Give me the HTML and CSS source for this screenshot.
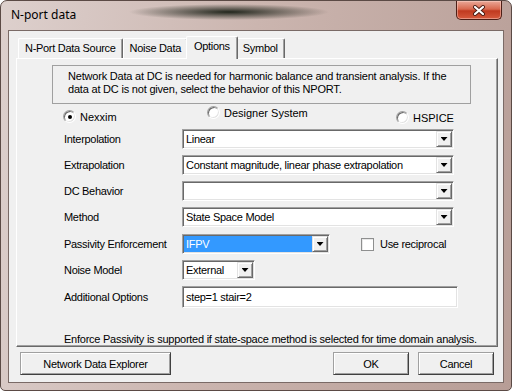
FILE: index.html
```html
<!DOCTYPE html>
<html lang="en">
<head>
  <meta charset="UTF-8">
  <title>N-port data</title>
  <link rel="stylesheet" href="styles.css">
</head>
<body>

<div class="window">
  <div class="titlebar">
    <span class="title">N-port data</span>
    <button class="close" type="button" aria-label="Close">
      <svg width="14" height="11" viewBox="0 0 14 11">
        <path d="M3 2 L11 9 M11 2 L3 9" stroke="#4a1c14" stroke-width="4" stroke-linecap="round"/>
        <path d="M3 2 L11 9 M11 2 L3 9" stroke="#fff" stroke-width="2.2" stroke-linecap="round"/>
      </svg>
    </button>
  </div>

  <div class="client">
    <div class="tabs">
      <div class="tab">N-Port Data Source</div>
      <div class="tab">Noise Data</div>
      <div class="tab active">Options</div>
      <div class="tab">Symbol</div>
    </div>

    <div class="pane">
      <div class="info">
        Network Data at DC is needed for harmonic balance and transient analysis. If the<br>
        data at DC is not given, select the behavior of this NPORT.
      </div>

      <div class="radios">
        <label class="radio-opt nexxim"><span class="radio checked"></span>Nexxim</label>
        <label class="radio-opt designer"><span class="radio"></span>Designer System</label>
        <label class="radio-opt hspice"><span class="radio"></span>HSPICE</label>
      </div>

      <div class="form">
        <span class="label">Interpolation</span>
        <div class="combo"><span class="value">Linear</span><span class="drop"></span></div>

        <span class="label">Extrapolation</span>
        <div class="combo"><span class="value">Constant magnitude, linear phase extrapolation</span><span class="drop"></span></div>

        <span class="label">DC Behavior</span>
        <div class="combo"><span class="value"></span><span class="drop"></span></div>

        <span class="label">Method</span>
        <div class="combo"><span class="value">State Space Model</span><span class="drop"></span></div>

        <span class="label spaced">Passivity Enforcement</span>
        <div class="inline-row spaced">
          <div class="combo short selected"><span class="value">IFPV</span><span class="drop"></span></div>
          <label class="check-opt"><span class="checkbox"></span>Use reciprocal</label>
        </div>

        <span class="label">Noise Model</span>
        <div class="combo tiny"><span class="value">External</span><span class="drop"></span></div>

        <span class="label">Additional Options</span>
        <div class="textbox">step=1 stair=2</div>
      </div>

      <div class="note">Enforce Passivity is supported if state-space method is selected for time domain analysis.</div>
    </div>

    <div class="buttons">
      <button class="btn explorer" type="button">Network Data Explorer</button>
      <button class="btn ok" type="button">OK</button>
      <button class="btn" type="button">Cancel</button>
    </div>
  </div>
</div>

</body>
</html>
```

FILE: styles.css
```css
body {
  margin: 0;
  background: #fff;
  font-family: "Liberation Sans", Arial, sans-serif;
  font-size: 11px;
  color: #000;
}
.window {
  width: 512px;
  height: 391px;
  box-sizing: border-box;
  border: 1px solid #5b4a45;
  border-radius: 7px 7px 5px 5px;
  padding: 0 7px 7px;
  display: flex;
  flex-direction: column;
  overflow: hidden;
  background:
    radial-gradient(100px 8px at 228px 11px, rgba(24,30,20,0.95), rgba(24,30,20,0)),
    linear-gradient(100deg, #ddd0cd 0%, #cbb5af 45%, #b79d96 100%);
}
.titlebar {
  height: 29px;
  display: flex;
  align-items: flex-start;
}
.title {
  font-family: "Noto Sans", sans-serif;
  font-size: 12px;
  line-height: 16px;
  margin: 6px 0 0 3px;
}
.close {
  margin-left: auto;
  margin-right: 2px;
  width: 46px;
  height: 19px;
  padding: 0;
  border: 1px solid #4d1f17;
  border-top: none;
  border-radius: 0 0 5px 5px;
  background: linear-gradient(#eaa898, #d8694f 45%, #c03a20 55%, #d65a3d);
  box-shadow: inset 0 0 0 1px rgba(255,220,210,0.45);
  display: flex;
  align-items: center;
  justify-content: center;
}
.client {
  flex: 1;
  display: flex;
  flex-direction: column;
  border: 1px solid #7a6a66;
  background: #f0f0f0;
  padding: 5px 5px 7px 7px;
}
.tabs {
  display: flex;
  align-items: flex-end;
  height: 22px;
  margin-left: 2px;
}
.tab {
  height: 20px;
  box-sizing: border-box;
  padding: 0 6px;
  line-height: 18px;
  letter-spacing: -0.3px;
  border: 1px solid;
  border-color: #fff #696969 transparent #fff;
  border-bottom: none;
  border-radius: 2px 2px 0 0;
  box-shadow: inset -1px 0 #a0a0a0;
  white-space: nowrap;
}
.tab.active {
  height: 23px;
  margin: 0 -2px -1px;
  padding: 0 7px;
  line-height: 19px;
  position: relative;
  z-index: 1;
  background: #f0f0f0;
}
.pane {
  flex: 1;
  display: flex;
  flex-direction: column;
  border: 1px solid;
  border-color: #fff #696969 #696969 #fff;
  box-shadow: inset -1px -1px #a0a0a0;
  padding: 6px 0 0 35px;
}
.info {
  width: 419px;
  height: 39px;
  box-sizing: border-box;
  border: 1px solid #a0a0a0;
  padding: 4px 0 0 15px;
  line-height: 13px;
  letter-spacing: -0.2px;
}
.radios {
  display: flex;
  align-items: flex-start;
  height: 13px;
  margin-top: 6px;
}
.radio-opt {
  display: flex;
  align-items: center;
  gap: 4px;
}
.nexxim {
  margin-left: 11px;
  width: 144px;
}
.designer {
  width: 189px;
  margin-top: -4px;
}
.hspice {
  margin-top: 1px;
}
.radio {
  width: 13px;
  height: 13px;
  box-sizing: border-box;
  border-radius: 50%;
  border: 1px solid;
  border-color: #a0a0a0 #fff #fff #a0a0a0;
  box-shadow: inset 1px 1px #696969, inset -1px -1px #e3e3e3;
  background: #fff;
  display: flex;
  align-items: center;
  justify-content: center;
}
.radio.checked::after {
  content: "";
  width: 4px;
  height: 4px;
  border-radius: 50%;
  background: #000;
}
.form {
  display: grid;
  grid-template-columns: 118px auto;
  row-gap: 6px;
  align-items: center;
  justify-items: start;
  margin-top: 6px;
  padding-left: 12px;
  letter-spacing: -0.3px;
}
.spaced {
  margin-top: 1px;
}
.combo {
  width: 272px;
  height: 20px;
  box-sizing: border-box;
  padding: 1px;
  border: 1px solid;
  border-color: #a0a0a0 #fff #fff #a0a0a0;
  box-shadow: inset 1px 1px #696969, inset -1px -1px #e3e3e3;
  background: #fff;
  display: flex;
}
.combo .value {
  flex: 1;
  padding-left: 2px;
  line-height: 16px;
  white-space: nowrap;
  overflow: hidden;
}
.combo.selected .value {
  background: #3399ff;
  color: #fff;
}
.combo.short {
  width: 148px;
}
.combo.tiny {
  width: 73px;
}
.drop {
  width: 16px;
  height: 16px;
  box-sizing: border-box;
  background: #f0f0f0;
  border: 1px solid;
  border-color: #e3e3e3 #696969 #696969 #e3e3e3;
  box-shadow: inset 1px 1px #fff, inset -1px -1px #a0a0a0;
  display: flex;
  align-items: center;
  justify-content: center;
}
.drop::after {
  content: "";
  width: 7px;
  height: 4px;
  background: #000;
  clip-path: polygon(0 0, 100% 0, 50% 100%);
}
.inline-row {
  display: flex;
  align-items: center;
}
.check-opt {
  display: flex;
  align-items: center;
  gap: 6px;
  margin-left: 31px;
}
.checkbox {
  width: 13px;
  height: 13px;
  box-sizing: border-box;
  border: 1px solid #8e8f8f;
  background: #fff;
  box-shadow: inset 1px 1px #e8e8e8;
}
.textbox {
  width: 276px;
  height: 22px;
  box-sizing: border-box;
  border: 1px solid;
  border-color: #a0a0a0 #fff #fff #a0a0a0;
  box-shadow: inset 1px 1px #696969, inset -1px -1px #e3e3e3;
  background: #fff;
  padding-left: 3px;
  line-height: 20px;
}
.note {
  margin-top: auto;
  padding-left: 12px;
  line-height: 13px;
  letter-spacing: -0.25px;
}
.buttons {
  display: flex;
  gap: 9px;
  margin: 5px 4px 0 4px;
}
.btn {
  height: 23px;
  width: 76px;
  box-sizing: border-box;
  padding: 0;
  font-family: inherit;
  font-size: 11px;
  letter-spacing: -0.3px;
  color: #000;
  background: #f0f0f0;
  border: 1px solid;
  border-color: #a0a0a0 #404040 #404040 #a0a0a0;
  box-shadow: inset 1px 1px #fff, inset -1px -1px #a0a0a0;
}
.btn.explorer {
  width: 151px;
}
.btn.ok {
  margin-left: auto;
}
```
